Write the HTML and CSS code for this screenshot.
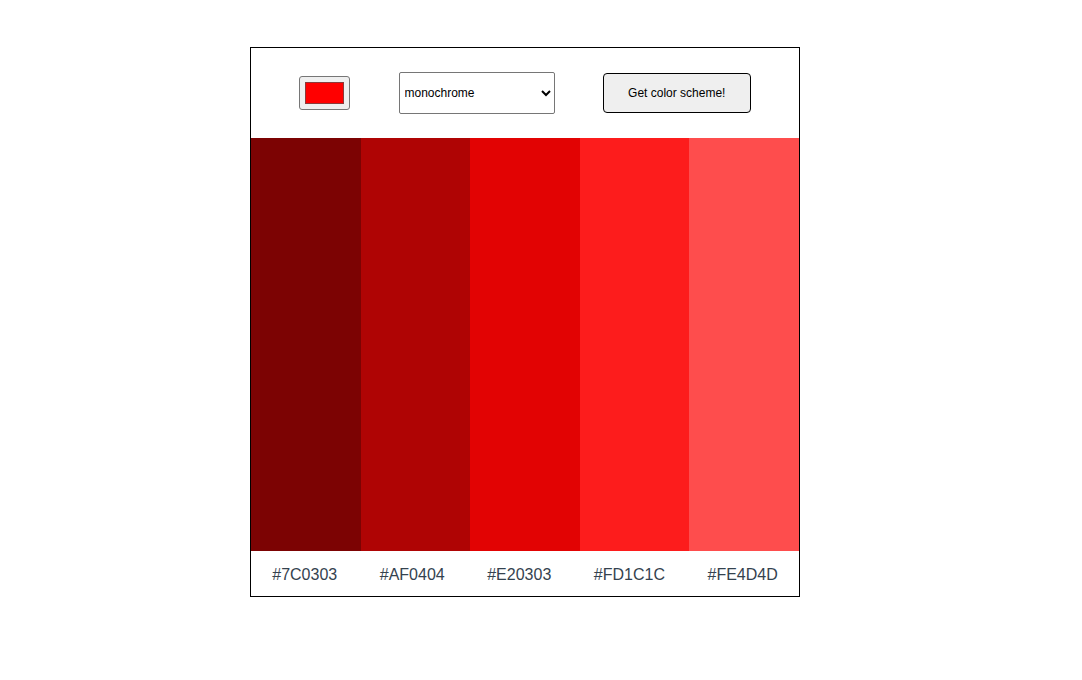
FILE: index.html
```html
<!DOCTYPE html>
<html lang="en">
<head>
<meta charset="utf-8">
<title>Color Scheme</title>
<link rel="stylesheet" href="styles.css">
</head>
<body>
<main class="scheme">
  <header class="controls">
    <input class="picker" type="color" value="#ff0000">
    <select class="mode">
      <option>monochrome</option>
      <option>monochrome-dark</option>
      <option>monochrome-light</option>
      <option>analogic</option>
      <option>complement</option>
    </select>
    <button class="go" type="button">Get color scheme!</button>
  </header>
  <section class="swatches">
    <div class="swatch" style="background:#7C0303"></div>
    <div class="swatch" style="background:#AF0404"></div>
    <div class="swatch" style="background:#E20303"></div>
    <div class="swatch" style="background:#FD1C1C"></div>
    <div class="swatch" style="background:#FE4D4D"></div>
  </section>
  <footer class="codes">
    <span class="code">#7C0303</span>
    <span class="code">#AF0404</span>
    <span class="code">#E20303</span>
    <span class="code">#FD1C1C</span>
    <span class="code">#FE4D4D</span>
  </footer>
</main>
</body>
</html>
```

FILE: styles.css
```css
html, body {
  margin: 0;
  padding: 0;
  background: #ffffff;
}

body {
  font-family: "Liberation Sans", Arial, sans-serif;
  padding-top: 47px;
  padding-left: 250px;
}

.scheme {
  width: 548px;
  height: 548px;
  border: 1px solid #000;
  display: flex;
  flex-direction: column;
}

.controls {
  height: 90px;
  display: flex;
  align-items: center;
  justify-content: space-evenly;
  flex-shrink: 0;
}

.picker {
  width: 51px;
  height: 34px;
  padding: 5px 5px;
  margin: 0 0 1px 0;
  box-sizing: border-box;
  border: 1px solid #767676;
  border-radius: 3px;
  background: #efefef;
  cursor: pointer;
}

.picker::-webkit-color-swatch-wrapper {
  padding: 0;
}

.picker::-webkit-color-swatch {
  border: 1px solid #8a3a3a;
  border-radius: 0;
}

.mode {
  width: 156px;
  height: 42px;
  box-sizing: border-box;
  border: 1px solid #767676;
  border-radius: 2px;
  background: #fff;
  color: #000;
  font-family: "Liberation Sans", Arial, sans-serif;
  font-size: 12px;
  padding: 0 1px;
  margin: 0;
}

.go {
  width: 148px;
  height: 40px;
  box-sizing: border-box;
  border: 1px solid #000;
  border-radius: 4px;
  background: #efefef;
  color: #000;
  font-family: "Liberation Sans", Arial, sans-serif;
  font-size: 12px;
  padding: 0;
}

.swatches {
  height: 413px;
  display: flex;
  flex-shrink: 0;
}

.swatch {
  flex: 1 1 0;
}

.codes {
  flex: 1;
  display: flex;
  align-items: center;
  justify-content: space-around;
}

.code {
  font-size: 16px;
  color: #34424f;
  padding-top: 3px;
}
```
